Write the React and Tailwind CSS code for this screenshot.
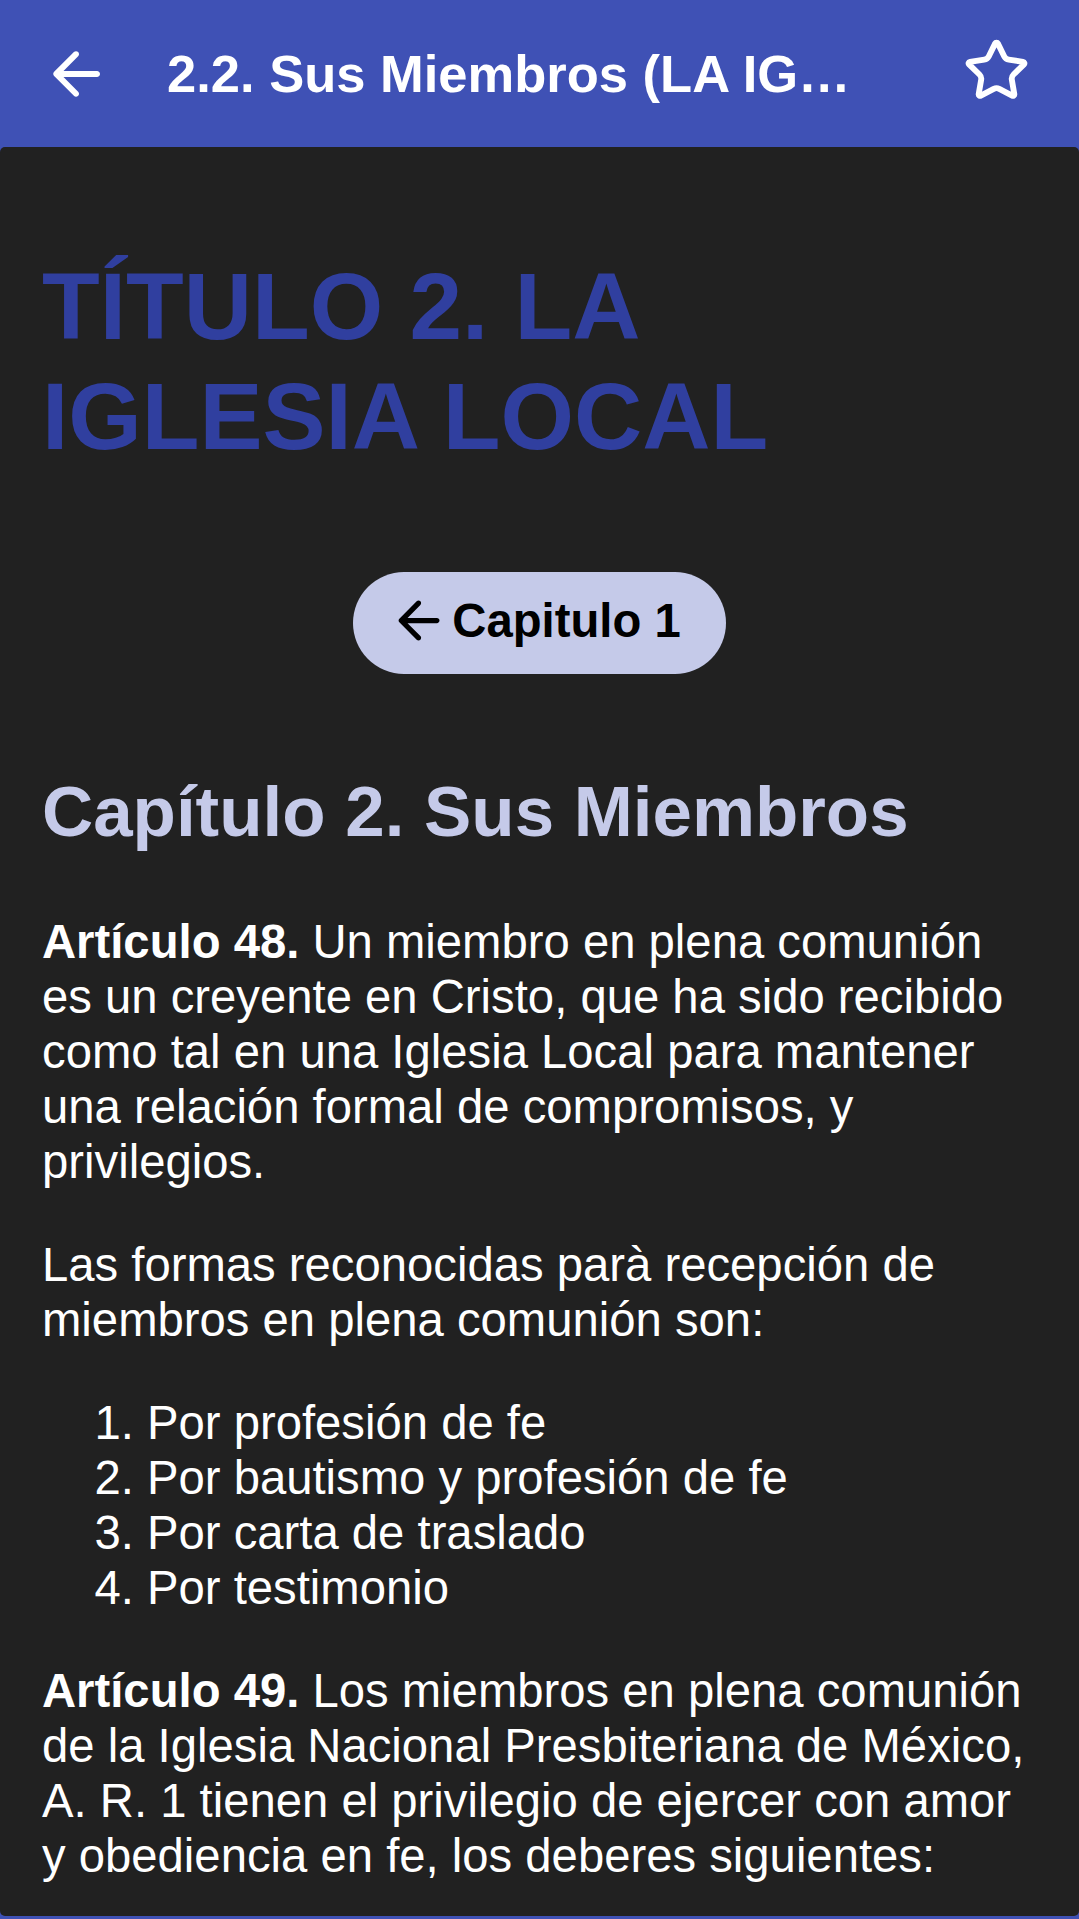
import React from 'react';
import { Star } from 'lucide-react';

// Material "arrow_back" (rounded)
function ArrowBack({ className }) {
  return (
    <svg className={className} viewBox="0 0 24 24" fill="currentColor">
      <path d="M19 11H7.83l4.88-4.88c.39-.39.39-1.03 0-1.42-.39-.39-1.02-.39-1.41 0l-6.59 6.59c-.39.39-.39 1.02 0 1.41l6.59 6.59c.39.39 1.02.39 1.41 0 .39-.39.39-1.02 0-1.41L7.83 13H19c.55 0 1-.45 1-1s-.45-1-1-1z" />
    </svg>
  );
}

const members = [
  'Por profesión de fe',
  'Por bautismo y profesión de fe',
  'Por carta de traslado',
  'Por testimonio',
];

export default function App() {
  return (
    <div
      className="w-[1079px] h-[1919px] overflow-hidden bg-[#3F51B5]"
      style={{ fontFamily: '"Liberation Sans", Arial, sans-serif' }}
    >
      {/* Toolbar */}
      <header className="h-[147px] flex items-center text-white">
        <button className="ml-[40px] w-[72px] h-[72px] flex-shrink-0">
          <ArrowBack className="w-[72px] h-[72px]" />
        </button>
        <h1 className="ml-[55px] w-[700px] truncate text-[52.5px] font-bold leading-[60px]">
          2.2. Sus Miembros (LA IGLESIA LOCAL)
        </h1>
        <button className="ml-[96px] w-[67px] h-[67px] flex-shrink-0 -mt-[6px]">
          <Star size={67} strokeWidth={2.1} />
        </button>
      </header>

      {/* Content card */}
      <main className="h-[1769px] overflow-hidden rounded-[5px] bg-[#212121] px-[42px] pt-[104px] text-white">
        <h1 className="text-[94.5px] leading-[110px] font-bold text-[#303F9F]">
          TÍTULO 2. LA IGLESIA LOCAL
        </h1>

        <div className="mt-[101px] flex justify-center">
          <button className="h-[102px] flex items-center rounded-full bg-[#C5CAE9] pl-[34px] pr-[45px] text-black">
            <ArrowBack className="w-[63px] h-[63px] -mt-[5px]" />
            <span className="ml-[2px] -mt-[5px] text-[47.25px] font-bold leading-[55px]">Capitulo 1</span>
          </button>
        </div>

        <h2 className="mt-[97px] text-[70.9px] leading-[81.5px] font-bold text-[#C5CAE9]">
          Capítulo 2. Sus Miembros
        </h2>

        <div className="text-[47.25px] leading-[55px]">
          <p className="mt-[61px]">
            <b>Artículo 48.</b> Un miembro en plena comunión es un creyente en Cristo, que ha sido recibido
            como tal en una Iglesia Local para mantener una relación formal de compromisos, y privilegios.
          </p>
          <p className="mt-[48px]">
            Las formas reconocidas parà recepción de miembros en plena comunión son:
          </p>
          <ol className="mt-[48px] list-decimal list-outside pl-[105px]">
            {members.map((m) => (
              <li key={m}>{m}</li>
            ))}
          </ol>
          <p className="mt-[48px]">
            <b>Artículo 49.</b> Los miembros en plena comunión de la Iglesia Nacional Presbiteriana de México,
            A. R. 1 tienen el privilegio de ejercer con amor y obediencia en fe, los deberes siguientes:
          </p>
        </div>
      </main>
    </div>
  );
}
